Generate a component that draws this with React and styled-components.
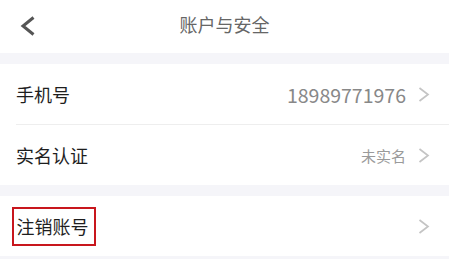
import React from 'react'
import styled, { createGlobalStyle } from 'styled-components'

const GlobalStyle = createGlobalStyle`
  html, body {
    margin: 0;
    padding: 0;
    background: #f5f5f9;
    font-family: "Noto Sans CJK SC", "Noto Sans", sans-serif;
  }
`

const Page = styled.div`
  width: 449px;
  min-height: 259px;
  background: #f5f5f9;
`

const NavBar = styled.div`
  height: 53px;
  background: #fff;
  display: flex;
  align-items: center;
  justify-content: center;
  position: relative;
`

const BackButton = styled.div`
  position: absolute;
  left: 19px;
  top: 15px;
  width: 18px;
  height: 22px;
  display: flex;
  align-items: center;
  justify-content: center;
`

const Title = styled.div`
  font-size: 18px;
  color: #666;
  margin-top: -5px;
`

const Group = styled.div`
  margin-top: 11px;
  background: #fff;
`

const Row = styled.div`
  height: 60px;
  display: flex;
  align-items: center;
  padding: 0 19px 0 16px;
  position: relative;
  &:not(:last-child)::after {
    content: '';
    position: absolute;
    left: 16px;
    right: 0;
    bottom: -1px;
    height: 1px;
    background: #eeeeee;
  }
  & + & {
    margin-top: 1px;
  }
`

const Label = styled.div`
  font-size: 18px;
  color: #1e1e1e;
  flex: 1;
  ${p => p.$marked && `
    flex: none;
    border: 2.5px solid #c8161d;
    margin-left: -4.5px;
    padding: 4px 5px 5px 3px;
    line-height: 26px;
  `}
`

const Spacer = styled.div`
  flex: 1;
`

const Value = styled.div`
  font-size: ${p => p.$small ? '15px' : '19.5px'};
  color: ${p => p.$small ? '#9a9a9a' : '#888'};
  margin-right: 12px;
`

const Chevron = () => (
  <svg width="12" height="15" viewBox="0 0 12 15">
    <path d="M1.5 1 L10 7.5 L1.5 14" fill="none" stroke="#c4c4c4" strokeWidth="1.7" />
  </svg>
)

const BackIcon = () => (
  <svg width="16" height="20" viewBox="0 0 16 20">
    <path d="M13.5 1.5 L3 10 L13.5 18.5" fill="none" stroke="#555" strokeWidth="3" strokeLinejoin="miter" />
  </svg>
)

export default function App() {
  return (
    <Page>
      <GlobalStyle />
      <NavBar>
        <BackButton><BackIcon /></BackButton>
        <Title>账户与安全</Title>
      </NavBar>
      <Group>
        <Row>
          <Label>手机号</Label>
          <Value>18989771976</Value>
          <Chevron />
        </Row>
        <Row>
          <Label>实名认证</Label>
          <Value $small>未实名</Value>
          <Chevron />
        </Row>
      </Group>
      <Group>
        <Row>
          <Label $marked>注销账号</Label>
          <Spacer />
          <Chevron />
        </Row>
      </Group>
    </Page>
  )
}
